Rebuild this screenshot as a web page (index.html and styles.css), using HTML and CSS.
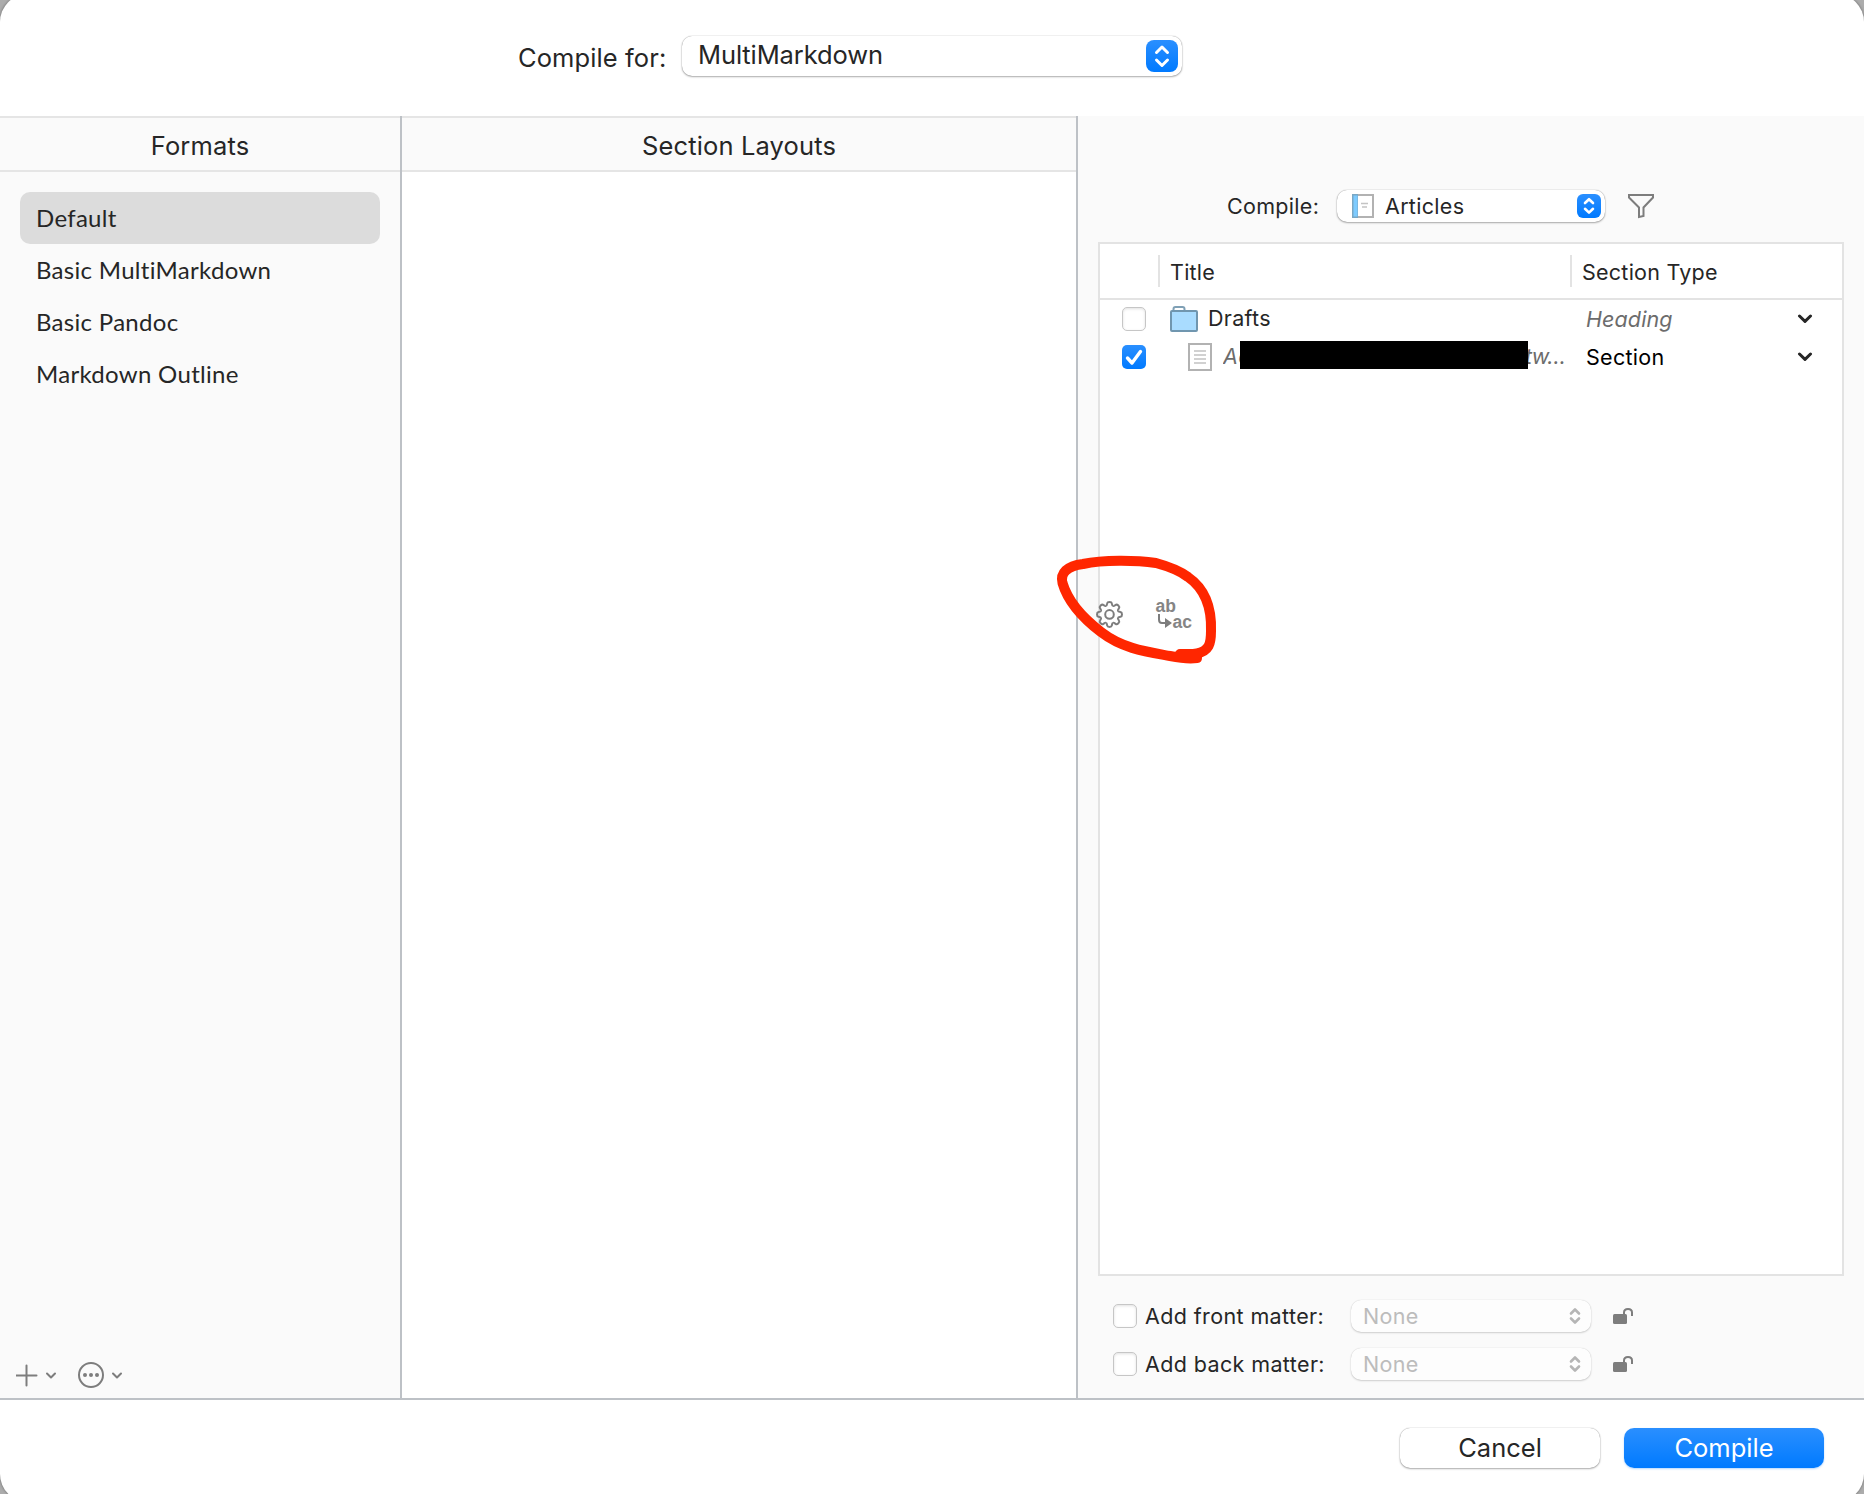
FILE: index.html
```html
<!DOCTYPE html>
<html lang="en">
<head>
    <meta charset="UTF-8">
    <meta name="viewport" content="width=device-width, initial-scale=1.0">
    <title>Compile</title>
    <link rel="stylesheet" href="styles.css">
</head>
<body>
<div class="window">

    <!-- Compile for -->
    <div class="topbar">
        <label class="label-large">Compile for:</label>
        <div class="select select-large">
            <span class="select-text">MultiMarkdown</span>
            <svg class="stepper-large" viewBox="0 0 32 32">
                <path d="M10.500 12.500L16 7L21.500 12.500M10.500 20L16 25.500L21.500 20"/>
            </svg>
        </div>
    </div>

    <div class="main">
        <!-- Formats -->
        <div class="formats">
            <div class="panel-header"><span>Formats</span></div>
            <ul class="format-list">
                <li class="selected">Default</li>
                <li>Basic MultiMarkdown</li>
                <li>Basic Pandoc</li>
                <li>Markdown Outline</li>
            </ul>
            <div class="format-actions">
                <svg width="120" height="30" viewBox="0 0 120 30">
                    <path d="M10.500 5.500V25.500M0.500 15.500H20.500"/>
                    <path d="M31 13.500L35 17.500L39 13.500"/>
                    <circle cx="75" cy="15" r="12"/>
                    <path d="M97 13.500L101 17.500L105 13.500"/>
                    <g class="dots"><circle cx="69" cy="15" r="2"/><circle cx="75" cy="15" r="2"/><circle cx="81" cy="15" r="2"/></g>
                </svg>
            </div>
        </div>

        <!-- Section Layouts -->
        <div class="layouts">
            <div class="panel-header"><span>Section Layouts</span></div>
        </div>

        <!-- Contents to compile -->
        <div class="contents">
            <div class="contents-bar">
                <label class="label">Compile:</label>
                <div class="select select-small">
                    <svg class="book-icon" width="22" height="24" viewBox="0 0 22 24">
                        <rect x="1" y="1" width="20" height="22" fill="#fff" stroke="#b2b2b2" stroke-width="2"/>
                        <rect x="0" y="0" width="6" height="24" fill="#79a7c4"/>
                        <rect x="1.500" y="1.500" width="4" height="21" fill="#7dcbff"/>
                        <path d="M9 9.500H16M10 13H15" stroke="#c4c4c4" stroke-width="1.500"/>
                    </svg>
                    <span class="select-text">Articles</span>
                    <svg class="stepper-small" viewBox="0 0 24 24">
                        <path d="M8 9L12 5.200L16 9M8 14.800L12 18.600L16 14.800"/>
                    </svg>
                </div>
                <svg class="filter-icon" width="26" height="26" viewBox="0 0 26 26">
                    <path d="M1 2H25V4.500L15.500 14.500V23L11 24V14.500L1 4.500Z"/>
                </svg>
            </div>

            <div class="table">
                <div class="table-head">
                    <div></div>
                    <div class="th">Title</div>
                    <div class="th">Section Type</div>
                </div>
                <div class="row">
                    <span class="checkbox"></span>
                    <div class="title-cell">
                        <svg width="28" height="26" viewBox="0 0 28 26">
                            <path d="M3.500 4.500V3Q3.500 1 5.500 1H12.500Q14.500 1 14.500 3V4.500" fill="#fff" stroke="#7fa0b5" stroke-width="2"/>
                            <rect x="1" y="5" width="26" height="20" rx="1" fill="#a9dcff" stroke="#7096af" stroke-width="2"/>
                        </svg>
                        <span class="drafts">Drafts</span>
                    </div>
                    <div class="type-cell"><i>Heading</i>
                        <svg width="16" height="10" viewBox="0 0 16 10"><path d="M2.500 2L8 7.300L13.500 2"/></svg>
                    </div>
                </div>
                <div class="row">
                    <span class="checkbox checked">
                        <svg width="24" height="24" viewBox="0 0 24 24"><path d="M5.500 13L10 18L18.500 6.500"/></svg>
                    </span>
                    <div class="title-cell child">
                        <svg width="24" height="28" viewBox="0 0 24 28">
                            <rect x="1" y="1" width="22" height="26" fill="#fff" stroke="#b2b2b2" stroke-width="2"/>
                            <path d="M6 8H18M6 12H18M6 16H18M6 20H18" stroke="#c2c2c2" stroke-width="1.600"/>
                        </svg>
                        <span class="doc-title">Ac</span>
                        <span class="redacted"></span>
                        <span class="doc-tail">tw…</span>
                    </div>
                    <div class="type-cell"><span>Section</span>
                        <svg width="16" height="10" viewBox="0 0 16 10"><path d="M2.500 2L8 7.300L13.500 2"/></svg>
                    </div>
                </div>
            </div>

            <div class="matter">
                <span class="checkbox"></span>
                <label>Add front matter:</label>
                <div class="select select-disabled">
                    <span class="select-text">None</span>
                    <svg width="12" height="18" viewBox="0 0 12 18"><path d="M2 6.500L6 2.500L10 6.500M2 11.500L6 15.500L10 11.500"/></svg>
                </div>
                <svg class="lock" width="20" height="16" viewBox="0 0 20 16">
                    <rect x="0" y="6" width="14" height="10" rx="1.500"/><path d="M11 7V4.500Q11 1 15 1Q19 1 19 4.500V8"/>
                </svg>
            </div>
            <div class="matter">
                <span class="checkbox"></span>
                <label>Add back matter:</label>
                <div class="select select-disabled">
                    <span class="select-text">None</span>
                    <svg width="12" height="18" viewBox="0 0 12 18"><path d="M2 6.500L6 2.500L10 6.500M2 11.500L6 15.500L10 11.500"/></svg>
                </div>
                <svg class="lock" width="20" height="16" viewBox="0 0 20 16">
                    <rect x="0" y="6" width="14" height="10" rx="1.500"/><path d="M11 7V4.500Q11 1 15 1Q19 1 19 4.500V8"/>
                </svg>
            </div>
        </div>
    </div>

    <div class="footer">
        <button class="cancel">Cancel</button>
        <button class="primary">Compile</button>
    </div>

    <!-- Options and replacements tabs, circled -->
    <svg class="annotation" width="200" height="140" viewBox="0 0 200 140">
        <g class="gear" transform="translate(69.500 74.400)">
            <path id="tooth" d="M-3.500 -8.500C-2.500 -8.900 -2.700 -9.700 -2.400 -11Q-2.100 -12.500 0 -12.500Q2.100 -12.500 2.400 -11C2.700 -9.700 2.500 -8.900 3.500 -8.500"/>
            <use href="#tooth" transform="rotate(45)"/>
            <use href="#tooth" transform="rotate(90)"/>
            <use href="#tooth" transform="rotate(135)"/>
            <use href="#tooth" transform="rotate(180)"/>
            <use href="#tooth" transform="rotate(225)"/>
            <use href="#tooth" transform="rotate(270)"/>
            <use href="#tooth" transform="rotate(315)"/>
            <circle r="4.300"/>
        </g>
        <text x="115.500" y="71.500">ab</text>
        <text x="132.500" y="88">ac</text>
        <path class="arrow" d="M119 74V79.500Q119 83 122 83H126"/>
        <path class="arrow-head" d="M125 78L132 83L125 88Z"/>
        <path class="loop" d="M140 114C145 114 152 114.500 157 113.500C169 111 171 104 171 91C172 61 161 46 148 37C139 30 127 26 116 23C96 20 63 19.500 43 24C27 26 20 33 22.500 43C28 62 44 79 61 92C83 109 108 112 130 116C140 118 150 119 157 118V115L140 114"/>
    </svg>
</div>
</body>
</html>
```
FILE: styles.css
```css
* {
    box-sizing: border-box;
}
body {
    font-family: Inter, "Liberation Sans", sans-serif;
    background-color: #acacac;
    color: #262626;
    margin: 0;
    height: 1494px;
    overflow: hidden;
}
svg {
    display: block;
    flex: none;
}
span, label, i {
    white-space: nowrap;
}
.window {
    position: relative;
    background-color: white;
    height: 1508px;
    margin-top: -6px;
    padding-top: 6px;
    border-radius: 28px;
    box-shadow: 0 0 2px 1px #8a8a8a;
    overflow: hidden;
}

/* Top bar */
.topbar {
    height: 116px;
    display: flex;
    align-items: flex-start;
    padding-left: 518px;
}
.label-large {
    font-size: 25.5px;
    line-height: 32px;
    margin-top: 42px;
    width: 164px;
    letter-spacing: 0.1px;
}
.select {
    display: flex;
    align-items: center;
    background-color: white;
    border-radius: 10px;
    box-shadow: 0 0 1px rgba(0, 0, 0, 0.45), 0 1px 2px rgba(0, 0, 0, 0.3);
}
.select-text {
    flex: 1;
}
.select-large {
    width: 500px;
    height: 40px;
    margin-top: 36px;
    padding: 0 4px 0 16px;
    font-size: 25.5px;
    letter-spacing: -0.1px;
}
.select-large .select-text {
    padding-bottom: 4px;
}
.stepper-large, .stepper-small {
    background: linear-gradient(#2a8fff, #007aff);
    border-radius: 8px;
    fill: none;
    stroke: white;
    stroke-width: 3;
    stroke-linecap: round;
    stroke-linejoin: round;
}
.stepper-large {
    width: 32px;
    height: 32px;
}
.stepper-small {
    width: 24px;
    height: 24px;
    border-radius: 6px;
    stroke-width: 2.6;
}

/* Panels */
.main {
    display: flex;
    height: 1284px;
    border-bottom: 2px solid #bdc1c6;
    background-color: #fafafa;
}
.formats {
    width: 402px;
    border-right: 2px solid #bdc1c6;
    display: flex;
    flex-direction: column;
}
.layouts {
    width: 676px;
    border-right: 2px solid #bdc1c6;
    background-color: white;
}
.panel-header {
    height: 56px;
    border-top: 2px solid #e5e5e5;
    border-bottom: 2px solid #e5e5e5;
    background-color: #fafafa;
    font-size: 25.5px;
    letter-spacing: 0.15px;
    line-height: 56px;
    text-align: center;
}
.format-list {
    list-style: none;
    margin: 20px;
    padding: 0;
    flex: 1;
    font-family: Lato, sans-serif;
    font-size: 24px;
    letter-spacing: 0.3px;
}
.format-list li {
    height: 52px;
    line-height: 51px;
    padding-left: 16px;
    border-radius: 10px;
}
.format-list .selected {
    background-color: #dcdcdc;
}
.format-actions {
    padding: 0 0 8px 16px;
}
.format-actions svg {
    fill: none;
    stroke: #7d7d7d;
    stroke-width: 2;
    stroke-linecap: round;
    stroke-linejoin: round;
}
.format-actions .dots {
    fill: #7d7d7d;
    stroke: none;
}

/* Contents */
.contents {
    flex: 1;
    padding: 74px 20px 0;
    font-size: 21.5px;
    letter-spacing: 0.3px;
}
.contents-bar {
    height: 32px;
    display: flex;
    align-items: center;
    padding-left: 129px;
}
.contents-bar .label {
    width: 110px;
}
.select-small {
    width: 268px;
    height: 32px;
    padding: 0 4px 0 15px;
}
.book-icon {
    margin-right: 11px;
}
.filter-icon {
    margin-left: 23px;
    fill: none;
    stroke: #7d7d7d;
    stroke-width: 2;
}
.table {
    height: 1034px;
    margin-top: 20px;
    border: 2px solid #e3e3e3;
    background-color: white;
}
.table-head {
    height: 56px;
    border-bottom: 2px solid #e3e3e3;
    display: grid;
    grid-template-columns: 58px 412px 1fr;
    align-items: center;
}
.th {
    height: 32px;
    line-height: 34px;
    border-left: 2px solid #e3e3e3;
    padding-left: 10px;
    letter-spacing: 0.25px;
}
.row {
    height: 38px;
    display: grid;
    grid-template-columns: 48px 416px 1fr;
    align-items: center;
    padding-left: 22px;
}
.checkbox {
    width: 24px;
    height: 24px;
    border-radius: 5px;
    border: 1px solid #c6c6c6;
    background-color: white;
    box-shadow: inset 0 1px 3px rgba(0, 0, 0, 0.12);
}
.checkbox.checked {
    border: none;
    background: linear-gradient(#2a8fff, #007aff);
    box-shadow: none;
}
.checkbox path {
    fill: none;
    stroke: white;
    stroke-width: 3.4;
    stroke-linecap: round;
    stroke-linejoin: round;
}
.title-cell {
    display: flex;
    align-items: center;
}
.title-cell .drafts {
    margin: -3px 0 0 10px;
}
.child {
    padding-left: 18px;
    font-style: italic;
    color: #6c6c6c;
}
.doc-title {
    width: 17px;
    margin: -2px 0 0 11px;
    overflow: hidden;
}
.redacted {
    z-index: 1;
    width: 288px;
    height: 28px;
    background-color: black;
    margin-top: -4px;
}
.doc-tail {
    margin: -2px 0 0 -3px;
    letter-spacing: -0.6px;
}
.type-cell {
    display: flex;
    align-items: center;
    justify-content: space-between;
    padding-right: 29px;
    color: black;
}
.type-cell i {
    color: #6c6c6c;
    letter-spacing: 0.1px;
}
.type-cell path {
    fill: none;
    stroke: #262626;
    stroke-width: 3;
    stroke-linecap: round;
    stroke-linejoin: round;
}

/* Front and back matter */
.matter {
    height: 32px;
    margin-top: 24px;
    padding-left: 15px;
    display: flex;
    align-items: center;
}
.matter + .matter {
    margin-top: 16px;
}
.matter label {
    width: 206px;
    margin-left: 8px;
    letter-spacing: 0.38px;
}
.select-disabled {
    width: 240px;
    height: 32px;
    padding: 0 10px 0 12px;
    color: #bcbcbc;
    background-color: #fdfdfd;
    box-shadow: 0 0 1px rgba(0, 0, 0, 0.2), 0 1px 2px rgba(0, 0, 0, 0.16);
}
.select-disabled path {
    fill: none;
    stroke: #b5b5b5;
    stroke-width: 2.6;
    stroke-linecap: round;
    stroke-linejoin: round;
}
.lock {
    margin-left: 22px;
    fill: #7d7d7d;
}
.lock path {
    fill: none;
    stroke: #7d7d7d;
    stroke-width: 2;
}

/* Footer */
.footer {
    display: flex;
    justify-content: flex-end;
    gap: 24px;
    padding: 28px 40px 0 0;
}
button {
    width: 200px;
    height: 40px;
    padding: 0;
    border: none;
    border-radius: 10px;
    font-family: inherit;
    font-size: 25.5px;
    line-height: 38px;
}
.cancel {
    background-color: white;
    color: #262626;
    box-shadow: 0 0 1px rgba(0, 0, 0, 0.45), 0 1px 2px rgba(0, 0, 0, 0.3);
}
.primary {
    background: linear-gradient(#2a8fff, #007aff);
    color: white;
    box-shadow: 0 1px 2px rgba(0, 122, 255, 0.3);
}

/* Overlay drawing */
.annotation {
    position: absolute;
    left: 1040px;
    top: 546px;
    fill: none;
}
.annotation text {
    font-family: "Liberation Sans", sans-serif;
    font-size: 17.5px;
    font-weight: bold;
    fill: #858585;
}
.gear, .arrow {
    stroke: #7d7d7d;
    stroke-width: 2;
    stroke-linejoin: round;
}
.arrow-head {
    fill: #7d7d7d;
}
.loop {
    stroke: #ff2600;
    stroke-width: 10;
    stroke-linecap: round;
    stroke-linejoin: round;
}
```
